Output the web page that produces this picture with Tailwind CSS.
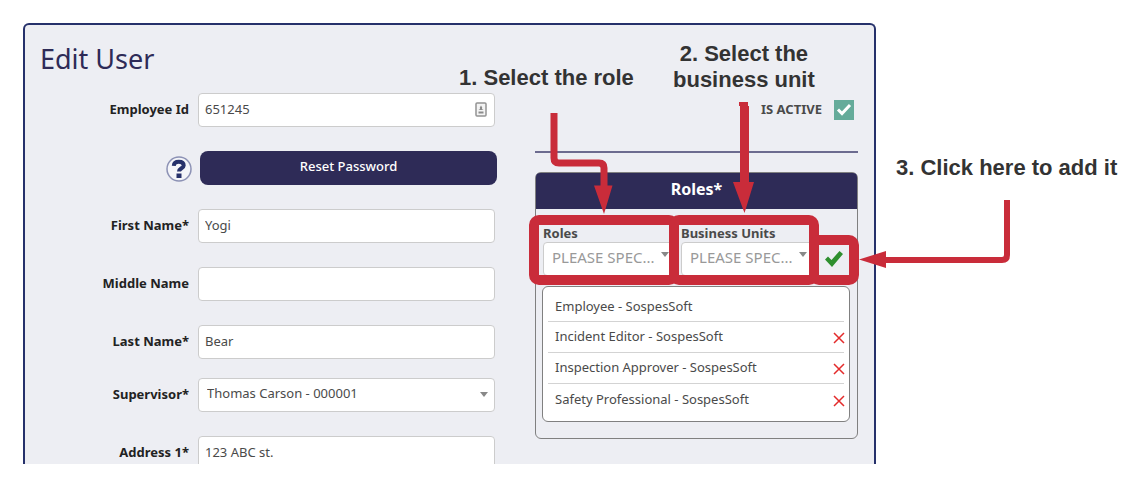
<!DOCTYPE html>
<html lang="en">
<head>
    <meta charset="UTF-8">
    <meta name="viewport" content="width=device-width, initial-scale=1.0">
    <title>Edit User</title>
    <script src="https://cdn.jsdelivr.net/npm/@tailwindcss/browser@4"></script>
</head>
<body class="bg-white font-['Noto_Sans',sans-serif] text-[13px] text-[#4a4a4a]">
    <!-- Right padding leaves room for the third callout -->
    <div class="pt-[23px] pl-[23px] pr-[271px]">

        <main class="flex gap-10 border-2 border-b-0 border-[#26316b] rounded-t-md bg-[#edeef3] pl-[15px] pr-4">

            <!-- User details -->
            <form class="flex-1 min-w-0">
                <h1 class="pt-4 mb-4 text-[27px] leading-9 text-[#2e2b57]">Edit User</h1>

                <div class="flex items-center">
                    <label for="employeeId" class="w-[149px] shrink-0 text-right font-bold text-[#222]">Employee Id</label>
                    <div class="relative flex-1 ml-[9px]">
                        <input id="employeeId" type="text" value="651245" class="block w-full h-[34px] rounded border border-[#ccc] bg-white px-1.5 pb-0.5">
                        <svg class="absolute right-2 top-[9px] w-3 h-4" viewBox="0 0 12 16" fill="none">
                            <rect x="1" y="1" width="10" height="13" rx="1" fill="#f4f4f4" stroke="#939393" stroke-width="1.5"/>
                            <path d="M6 3.500 7.200 5.500 7 7l1.500 1H3.500L5 7l-.2-1.500ZM3.500 9.500h5v2h-5Z" fill="#8b8b8b"/>
                        </svg>
                    </div>
                </div>

                <div class="flex items-center mt-6">
                    <div class="w-[152px] shrink-0 flex justify-end">
                        <svg class="w-[26px] h-[34px]" viewBox="0 0 26 34" role="img" aria-label="Help">
                            <circle cx="13" cy="18" r="12" fill="#f4f5f9" stroke="#8d92b5" stroke-width="1.500"/>
                            <path d="M7.800 14.800C8 11.800 10 10.800 12.800 10.800c3 0 4.900 1.200 4.900 3.600 0 3-4.700 2.800-4.700 6.200" fill="none" stroke="#26316b" stroke-width="4"/>
                            <rect x="10.500" y="22.500" width="5" height="4.500" fill="#26316b"/>
                        </svg>
                    </div>
                    <button type="button" class="flex-1 ml-2 -mr-0.5 h-[34px] rounded-lg bg-[#2e2b57] pb-0.5 font-medium text-white">Reset Password</button>
                </div>

                <div class="flex items-center mt-6">
                    <label for="firstName" class="w-[149px] shrink-0 text-right font-bold text-[#222]">First Name*</label>
                    <input id="firstName" type="text" value="Yogi" class="flex-1 min-w-0 ml-[9px] h-[34px] rounded border border-[#ccc] bg-white px-1.5 pb-0.5">
                </div>

                <div class="flex items-center mt-6">
                    <label for="middleName" class="w-[149px] shrink-0 text-right font-bold text-[#222]">Middle Name</label>
                    <input id="middleName" type="text" class="flex-1 min-w-0 ml-[9px] h-[34px] rounded border border-[#ccc] bg-white px-1.5 pb-0.5">
                </div>

                <div class="flex items-center mt-6">
                    <label for="lastName" class="w-[149px] shrink-0 text-right font-bold text-[#222]">Last Name*</label>
                    <input id="lastName" type="text" value="Bear" class="flex-1 min-w-0 ml-[9px] h-[34px] rounded border border-[#ccc] bg-white px-1.5 pb-0.5">
                </div>

                <div class="flex items-center mt-[19px]">
                    <label for="supervisor" class="w-[149px] shrink-0 text-right font-bold text-[#222]">Supervisor*</label>
                    <div class="relative flex-1 ml-[9px]">
                        <select id="supervisor" class="block w-full h-[34px] appearance-none rounded border border-[#ccc] bg-white px-2 pb-0.5">
                            <option>Thomas Carson - 000001</option>
                        </select>
                        <svg class="pointer-events-none absolute right-[7px] top-[14px] w-2 h-[5px]" viewBox="0 0 8 5"><path d="M0 0h8L4 5Z" fill="#888"/></svg>
                    </div>
                </div>

                <!-- Last visible row runs off the end of the panel -->
                <div class="flex items-start mt-6 h-7 overflow-hidden">
                    <label for="address1" class="w-[149px] shrink-0 text-right font-bold leading-8 text-[#222]">Address 1*</label>
                    <input id="address1" type="text" value="123 ABC st." class="flex-1 min-w-0 ml-[9px] h-[34px] rounded border border-[#ccc] bg-white px-1.5 pb-0.5">
                </div>
            </form>

            <!-- Status and roles -->
            <div class="relative w-[323px] shrink-0 pt-[75px]">
                <div class="flex items-center justify-end gap-3 pr-1 pb-[31px] border-b-2 border-[#6c6b8f]">
                    <label for="isActive" class="font-bold">IS ACTIVE</label>
                    <span class="relative block size-5">
                        <input id="isActive" type="checkbox" checked class="block size-5 appearance-none bg-[#65ab9a]">
                        <svg class="pointer-events-none absolute inset-0" viewBox="0 0 20 20" fill="none" stroke="#fff" stroke-width="3"><path d="M4 9.500 8 13.500 16 5"/></svg>
                    </span>
                </div>

                <section class="mt-[19px] rounded-md border border-[#808080] pb-4">
                    <h2 class="h-9 rounded-t bg-[#2e2b57] text-center text-base leading-8 font-bold text-white">Roles*</h2>

                    <div class="flex items-end pt-4 pl-[7px] pr-2">
                        <div class="w-[138px] pr-1">
                            <label for="role" class="block leading-[17px] font-bold">Roles</label>
                            <div class="relative">
                                <select id="role" class="block w-full h-[34px] appearance-none rounded border border-[#ccc] bg-white px-2 pb-1 text-[15px] text-[#999]">
                                    <option>PLEASE SPEC...</option>
                                </select>
                                <svg class="pointer-events-none absolute right-2 top-[10px] w-2 h-[5px]" viewBox="0 0 8 5"><path d="M0 0h8L4 5Z" fill="#888"/></svg>
                            </div>
                        </div>
                        <div class="w-[138px] pr-1">
                            <label for="businessUnit" class="block leading-[17px] font-bold">Business Units</label>
                            <div class="relative">
                                <select id="businessUnit" class="block w-full h-[34px] appearance-none rounded border border-[#ccc] bg-white px-2 pb-1 text-[15px] text-[#999]">
                                    <option>PLEASE SPEC...</option>
                                </select>
                                <svg class="pointer-events-none absolute right-2 top-[10px] w-2 h-[5px]" viewBox="0 0 8 5"><path d="M0 0h8L4 5Z" fill="#888"/></svg>
                            </div>
                        </div>
                        <button type="button" aria-label="Add role" class="flex flex-1 h-[34px] items-center justify-center">
                            <svg class="w-5 h-[18px]" viewBox="0 0 20 18"><path d="M1 9.500 4 6.500 7.500 10 15.500 1 19 4 8 17Z" fill="#2e8f2e"/></svg>
                        </button>
                    </div>

                    <ul class="mt-2.5 ml-1.5 mr-[7px] rounded-md border border-[#808080] bg-white px-[5px] pt-1 pb-1.5">
                        <li class="h-[31px] border-b border-[#d3d3d3] px-[7px] leading-[30px]">Employee - SospesSoft</li>
                        <li class="flex h-[31px] items-center justify-between border-b border-[#d3d3d3] pl-[7px]">
                            Incident Editor - SospesSoft
                            <button type="button" aria-label="Remove Incident Editor" class="-mr-px pt-0.5"><svg class="size-3" viewBox="0 0 12 12" stroke="#e32b2b" stroke-width="1.500"><path d="M1 1l10 10M11 1 1 11"/></svg></button>
                        </li>
                        <li class="flex h-[31px] items-center justify-between border-b border-[#d3d3d3] pl-[7px]">
                            Inspection Approver - SospesSoft
                            <button type="button" aria-label="Remove Inspection Approver" class="-mr-px pt-0.5"><svg class="size-3" viewBox="0 0 12 12" stroke="#e32b2b" stroke-width="1.500"><path d="M1 1l10 10M11 1 1 11"/></svg></button>
                        </li>
                        <li class="flex h-[31px] items-center justify-between pl-[7px]">
                            Safety Professional - SospesSoft
                            <button type="button" aria-label="Remove Safety Professional" class="-mr-px pt-0.5"><svg class="size-3" viewBox="0 0 12 12" stroke="#e32b2b" stroke-width="1.500"><path d="M1 1l10 10M11 1 1 11"/></svg></button>
                        </li>
                    </ul>
                </section>

                <!-- Callouts drawn over the form -->
                <svg class="pointer-events-none absolute top-0 left-0 w-[480px] h-[270px] overflow-visible" viewBox="535 25 480 270" fill="none" stroke="#c92c3a">
                    <rect x="534" y="220" width="140" height="60" rx="5" stroke-width="10"/>
                    <rect x="674" y="220" width="140" height="60" rx="5" stroke-width="10"/>
                    <rect x="814" y="240" width="40" height="40" rx="5" stroke-width="10"/>
                    <path d="M554 113v45q0 5 5 5h40q5 0 5 5v18" stroke-width="7"/>
                    <path d="M744.500 106v77" stroke-width="9"/>
                    <path d="M739 104h9" stroke-width="4"/>
                    <path d="M1007 200v55q0 5-5 5H885" stroke-width="6"/>
                    <path d="M594 185.500h18.500L604 214ZM733 182h21l-9.500 31ZM886 251v17l-27-8.500Z" fill="#c92c3a" stroke="none"/>
                </svg>
                <p class="absolute top-10 -left-[76px] whitespace-nowrap font-['Liberation_Sans',sans-serif] text-[22px] leading-[26px] font-bold text-[#333]">1. Select the role</p>
                <p class="absolute top-4 left-[138px] whitespace-nowrap text-center font-['Liberation_Sans',sans-serif] text-[22px] leading-[26px] font-bold text-[#333]">2. Select the<br>business unit</p>
                <p class="absolute top-[130px] left-[361px] whitespace-nowrap font-['Liberation_Sans',sans-serif] text-[22px] leading-[26px] font-bold text-[#333]">3. Click here to add it</p>
            </div>
        </main>
    </div>
</body>
</html>
